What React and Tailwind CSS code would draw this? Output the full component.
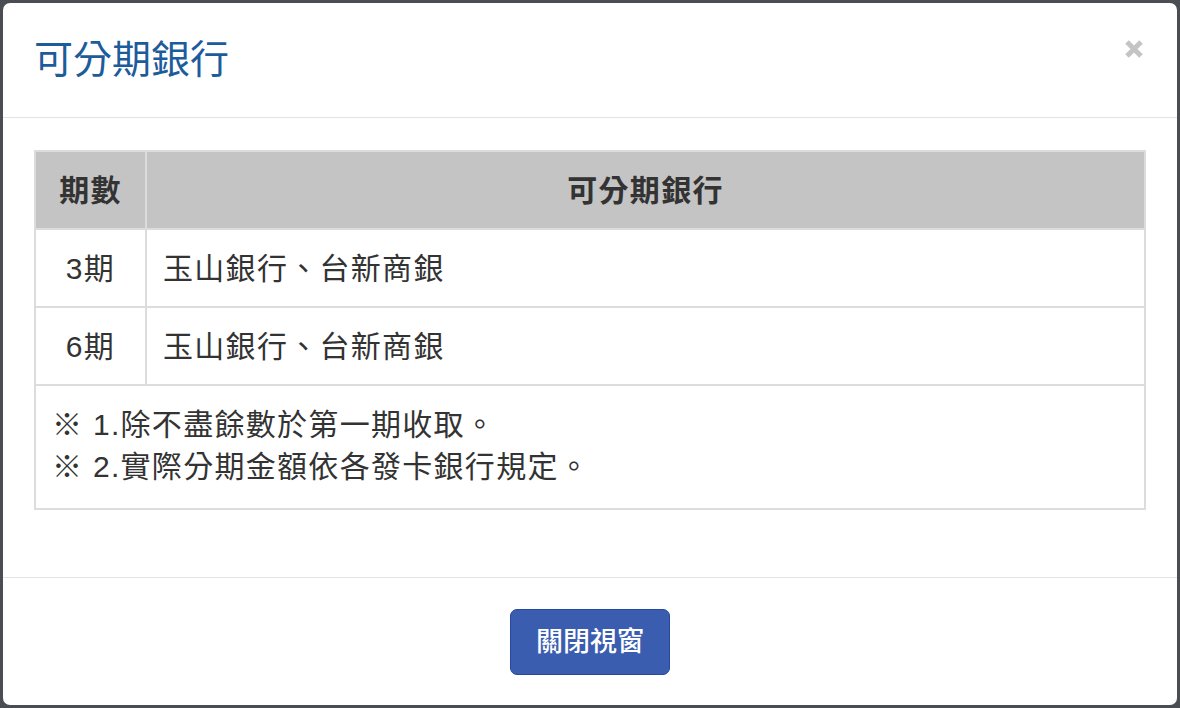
export default function App() {
  const font = { fontFamily: '"Liberation Sans", "Noto Sans CJK TC", sans-serif' };
  return (
    <div className="w-[1180px] h-[708px] bg-[#4a4d52] p-[3px]" style={font}>
      <div className="w-full h-full bg-white rounded-[7px] flex flex-col overflow-hidden">
        <div className="h-[115px] shrink-0 border-b border-[#e3e3e3] flex items-start justify-between pl-[31px] pr-[32px] pt-[32px]">
          <h1 className="text-[39px] leading-[50px] text-[#1d5c9b] font-normal">可分期銀行</h1>
          <button className="mt-[3px]">
            <svg width="22" height="22" viewBox="0 0 22 22">
              <path d="M4 4 L18 18 M18 4 L4 18" stroke="#c4c4c4" strokeWidth="5" strokeLinecap="butt" />
            </svg>
          </button>
        </div>
        <div className="h-[460px] shrink-0 border-b border-[#e3e3e3] pt-[32px] px-[31px]">
          <table className="w-full border-collapse text-[30px] tracking-[1.3px] text-[#333]">
            <thead>
              <tr className="bg-[#c4c4c4] h-[78px]">
                <th className="border-2 border-[#dcdcdc] w-[111px] font-bold">期數</th>
                <th className="border-2 border-[#dcdcdc] font-bold">可分期銀行</th>
              </tr>
            </thead>
            <tbody>
              <tr className="h-[78px]">
                <td className="border-2 border-[#dcdcdc] text-center">3期</td>
                <td className="border-2 border-[#dcdcdc] pl-[16px]">玉山銀行、台新商銀</td>
              </tr>
              <tr className="h-[78px]">
                <td className="border-2 border-[#dcdcdc] text-center">6期</td>
                <td className="border-2 border-[#dcdcdc] pl-[16px]">玉山銀行、台新商銀</td>
              </tr>
              <tr>
                <td colSpan={2} className="border-2 border-[#dcdcdc] pl-[16px] pt-[18px] pb-[20px] leading-[42px]">
                  <div>※ 1.除不盡餘數於第一期收取。</div>
                  <div>※ 2.實際分期金額依各發卡銀行規定。</div>
                </td>
              </tr>
            </tbody>
          </table>
        </div>
        <div className="flex-1 flex justify-center pt-[31px]">
          <button className="w-[160px] h-[66px] bg-[#3a5daf] border border-[#2747a0] rounded-[7px] text-white text-[27px] font-medium">
            關閉視窗
          </button>
        </div>
      </div>
    </div>
  );
}
